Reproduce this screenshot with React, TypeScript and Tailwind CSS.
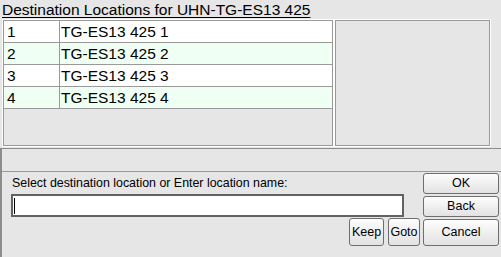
import React from "react";

const rows = [
  { n: "1", name: "TG-ES13 425 1" },
  { n: "2", name: "TG-ES13 425 2" },
  { n: "3", name: "TG-ES13 425 3" },
  { n: "4", name: "TG-ES13 425 4" },
];

function Btn({ label, className }: { label: string; className: string }) {
  return (
    <div
      className={
        "flex items-center justify-center rounded-[3px] border border-[#6e6e6e] bg-linear-to-b from-[#fdfdfd] to-[#e2e2e2] text-[12.5px] text-black " +
        className
      }
    >
      {label}
    </div>
  );
}

export default function App() {
  return (
    <div className="w-[501px] h-[257px] bg-[#e6e6e6] overflow-hidden flex flex-col font-['Liberation_Sans',Arial,sans-serif] text-black">
      <div className="h-[19px] pl-[2px] text-[15.5px] leading-[19px] underline underline-offset-[2px] whitespace-nowrap">
        Destination Locations for UHN-TG-ES13 425
      </div>
      <div className="h-[128px] flex pl-[2px]">
        <div className="w-[332px] h-full border border-white">
          <div className="h-full border border-[#999] flex flex-col overflow-hidden">
            {rows.map((r, i) => (
              <div
                key={r.n}
                className={
                  "flex h-[22px] border-b border-[#999] text-[15.5px] leading-[21px] " +
                  (i % 2 === 1 ? "bg-[#f0fff4]" : "bg-white")
                }
              >
                <div className="w-[56px] border-r border-[#999] pl-[3px]">{r.n}</div>
                <div className="flex-1 pl-[1px] whitespace-nowrap">{r.name}</div>
              </div>
            ))}
          </div>
        </div>
        <div className="w-[157px] h-full border border-white">
          <div className="h-full border border-[#999]" />
        </div>
      </div>
      <div className="mt-[1px] flex-1 flex flex-col border-t border-l-2 border-[#8c8c8c]">
        <div className="h-[23px] border-b border-[#999]" />
        <div className="flex-1 flex">
          <div className="w-[418px] flex flex-col">
            <div className="mt-[4px] pl-[10px] h-[14px] text-[12.4px] leading-[14px] whitespace-nowrap">
              Select destination location or Enter location name:
            </div>
            <div className="mt-[4px] ml-[9px] w-[393px] h-[23px] border-2 border-[#626262] bg-white flex items-center">
              <div className="ml-[1px] w-[1px] h-[16px] bg-black" />
            </div>
            <div className="mt-[1px] flex justify-end gap-[4px]">
              <Btn label="Keep" className="w-[35px] h-[28px]" />
              <Btn label="Goto" className="w-[32px] h-[28px]" />
            </div>
          </div>
          <div className="ml-[3px] w-[76px] pt-[1px] flex flex-col gap-[2px]">
            <Btn label="OK" className="h-[21px]" />
            <Btn label="Back" className="h-[21px]" />
            <Btn label="Cancel" className="h-[27px]" />
          </div>
        </div>
      </div>
    </div>
  );
}
